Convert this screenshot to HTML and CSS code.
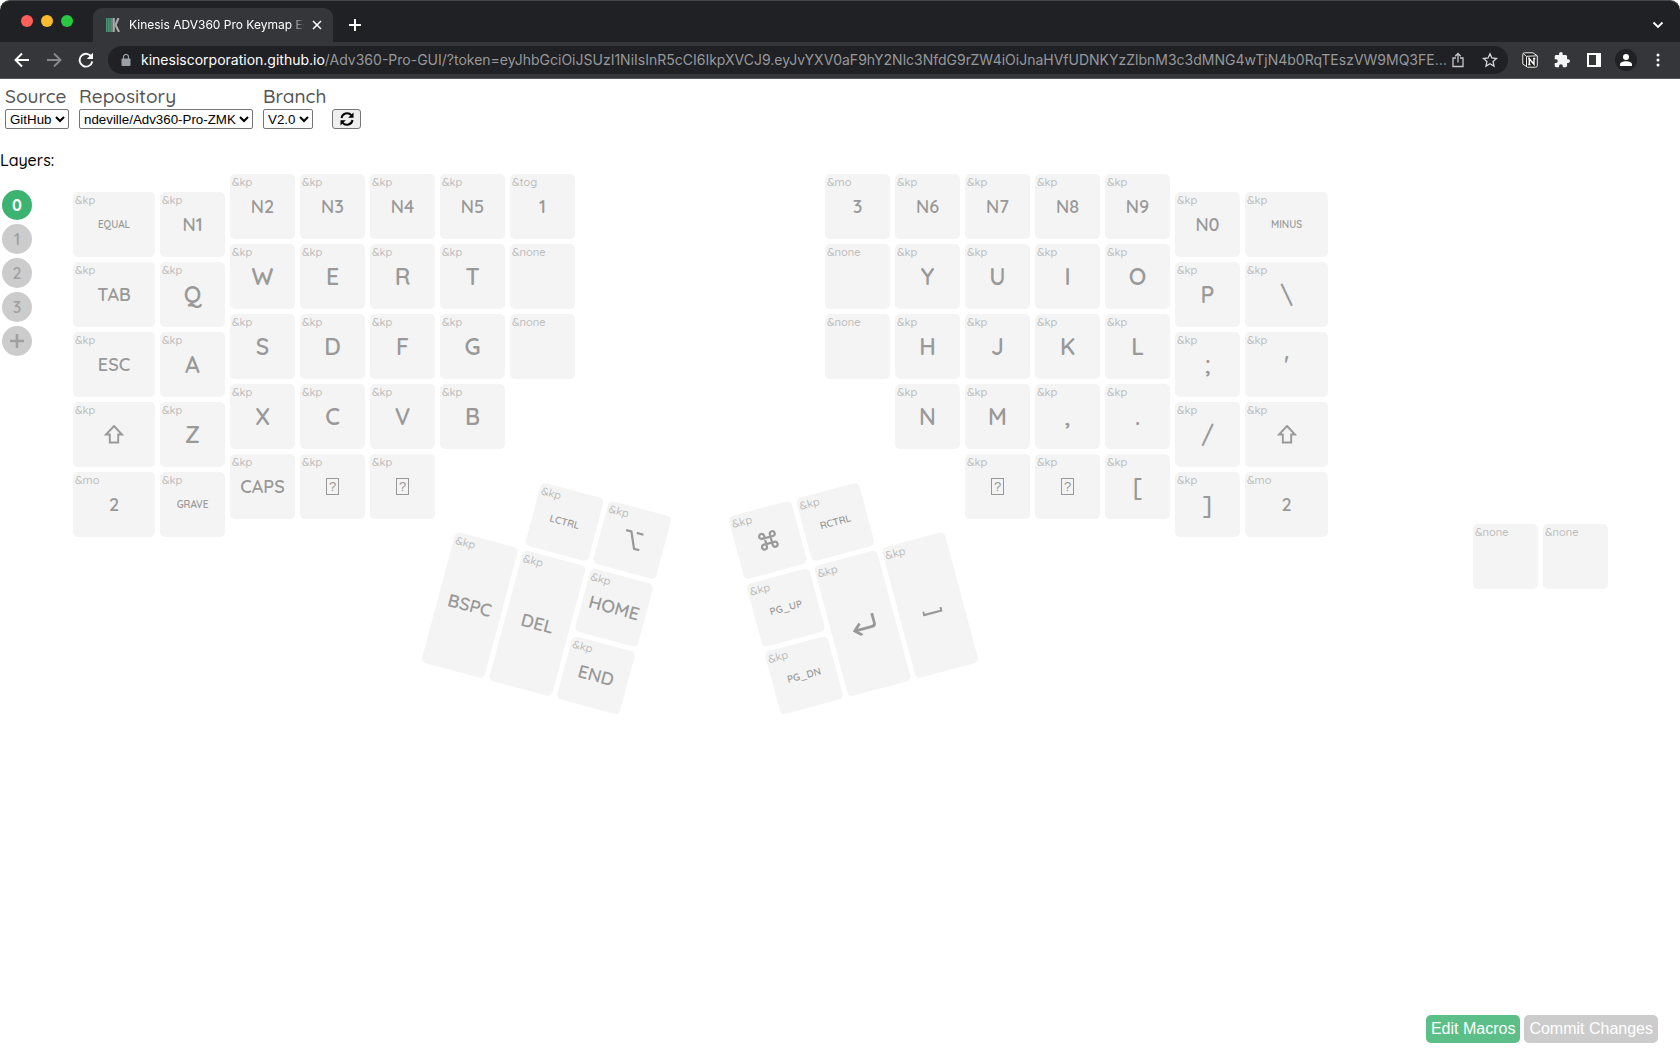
FILE: index.html
```html
<!DOCTYPE html>
<html lang="en">
<head>
<meta charset="utf-8">
<title>Kinesis ADV360 Pro Keymap Editor</title>
<link rel="stylesheet" href="styles.css">
</head>
<body>
<svg class="defs" aria-hidden="true">
  <symbol id="shift" viewBox="0 0 20 20"><path d="M10 1 18 9.500H14.200V17.500H5.800V9.500H2Z" fill="none" stroke="currentColor" stroke-width="1.900"/></symbol>
</svg>

<div class="browser">
  <div class="tabs">
    <div class="lights"><i class="red"></i><i class="amber"></i><i class="green"></i></div>
    <div class="tab">
      <svg class="favicon" width="14" height="14" viewBox="0 0 14 14"><path d="M.7 0V14M2.900 0V14M5.100 0V14" stroke="#4b9878" stroke-width="1.700"/><path d="M7.600 0V14" stroke="#aaa" stroke-width="2.400"/><path d="M12.500 0 9.500 7l3.500 7" fill="none" stroke="#aaa" stroke-width="2.200"/></svg>
      <span class="tab-title">Kinesis ADV360 Pro Keymap Ed</span>
      <button class="plain" aria-label="Close tab"><svg width="10" height="10" viewBox="0 0 10 10"><path d="M1 1 9 9M9 1 1 9" stroke="#fff" stroke-width="1.500"/></svg></button>
    </div>
    <button class="plain new-tab" aria-label="New tab"><svg width="14" height="14" viewBox="0 0 14 14"><path d="M7 1V13M1 7H13" stroke="#fff" stroke-width="2"/></svg></button>
    <button class="plain tab-menu" aria-label="Search tabs"><svg width="12" height="12" viewBox="0 0 12 12"><path d="M1.500 3.500 6 8 10.500 3.500" fill="none" stroke="#fff" stroke-width="1.800"/></svg></button>
  </div>
  <div class="navbar">
    <button class="plain" aria-label="Back"><svg width="16" height="16" viewBox="0 0 16 16"><path d="M15 8H2M8 1.500 1.500 8 8 14.500" fill="none" stroke="#fff" stroke-width="1.900"/></svg></button>
    <button class="plain" aria-label="Forward"><svg width="16" height="16" viewBox="0 0 16 16"><path d="M1 8H14M8 1.500 14.500 8 8 14.500" fill="none" stroke="#87888b" stroke-width="1.900"/></svg></button>
    <button class="plain" aria-label="Reload"><svg width="16" height="16" viewBox="0 0 16 16"><path d="M13.700 5.200A6.400 6.400 0 1 0 14.300 9.500" fill="none" stroke="#fff" stroke-width="1.900"/><path d="M15 .8V7H8.800Z" fill="#fff"/></svg></button>
    <div class="omnibox">
      <svg width="10" height="12" viewBox="0 0 10 12"><path d="M1.500 4.500H8.500Q9.500 4.500 9.500 5.500V11Q9.500 12 8.500 12H1.500Q.5 12 .5 11V5.500Q.5 4.500 1.500 4.500Z" fill="#9aa0a6"/><path d="M2.500 5V3A2.500 2.500 0 0 1 7.500 3V5" fill="none" stroke="#9aa0a6" stroke-width="1.200"/></svg>
      <span class="url"><b>kinesiscorporation.github.io</b>/Adv360-Pro-GUI/?token=eyJhbGciOiJSUzI1NiIsInR5cCI6IkpXVCJ9.eyJvYXV0aF9hY2Nlc3NfdG9rZW4iOiJnaHVfUDNKYzZlbnM3c3dMNG4wTjN4b0RqTEszVW9MQ3FE…</span>
      <button class="plain" aria-label="Share"><svg width="12" height="16" viewBox="0 0 12 16"><path d="M4 6H1V14.500H11V6H8M6 10.500V1.800M3.200 4.300 6 1.500 8.800 4.300" fill="none" stroke="#c4c7c9" stroke-width="1.300"/></svg></button>
      <button class="plain" aria-label="Bookmark"><svg width="16" height="16" viewBox="0 0 16 16"><path d="m8 1.800 1.900 4.200 4.600.5-3.400 3.100.9 4.500L8 11.800 4 14.100l.9-4.500L1.500 6.500 6.100 6Z" fill="none" stroke="#d5d7d9" stroke-width="1.300"/></svg></button>
    </div>
    <button class="plain" aria-label="Notion Web Clipper"><svg width="16" height="16" viewBox="0 0 16 16"><path d="M2.500.8H11L15.300 3.800V13.500Q15.300 15.200 13.500 15.200H5.500L.8 12V2.500Q.8.8 2.500.8Z" fill="#222" stroke="#eee"/><path d="M1.200 1.500 4.500 4.500V15M4.500 4.300 15 3.800" fill="none" stroke="#eee"/><path d="M7.300 12.500V6.700L12 12.300V6.500M6.200 6.500H8M11 6.500H13.300M6.200 12.500H8.500" fill="none" stroke="#fff" stroke-width="1.400"/></svg></button>
    <button class="plain" aria-label="Extensions"><svg width="16" height="16" viewBox="1 1 22 22"><path d="M20.500 11H19V7c0-1.100-.9-2-2-2h-4V3.500a2.500 2.500 0 0 0-5 0V5H4c-1.100 0-2 .9-2 2v3.800h1.500a2.700 2.700 0 0 1 0 5.400H2V20c0 1.100.9 2 2 2h3.800v-1.500a2.700 2.700 0 0 1 5.400 0V22H17c1.100 0 2-.9 2-2v-4h1.500a2.500 2.500 0 0 0 0-5Z" fill="#f1f3f4"/></svg></button>
    <button class="plain" aria-label="Side panel"><svg width="14" height="14" viewBox="0 0 14 14"><path d="M0 0H14V14H0ZM2 2V12H9V2Z" fill="#fff" fill-rule="evenodd"/></svg></button>
    <button class="plain profile" aria-label="Profile"><svg width="12" height="12" viewBox="0 0 12 12"><circle cx="6" cy="3" r="3" fill="#fff"/><path d="M0 12V10.500C0 8 3 7.200 6 7.200s6 .8 6 3.300V12Z" fill="#fff"/></svg></button>
    <button class="plain" aria-label="Menu"><svg width="4" height="14" viewBox="0 0 4 14"><circle cx="2" cy="2" r="1.500" fill="#fff"/><circle cx="2" cy="7" r="1.500" fill="#fff"/><circle cx="2" cy="12" r="1.500" fill="#fff"/></svg></button>
  </div>
</div>

<form class="picker">
  <div class="field source"><label for="source">Source</label><select id="source"><option>GitHub</option></select></div>
  <div class="field repo"><label for="repo">Repository</label><select id="repo"><option>ndeville/Adv360-Pro-ZMK</option></select></div>
  <div class="field branch"><label for="branch">Branch</label><select id="branch"><option>V2.0</option></select></div>
  <button class="refresh" type="button" aria-label="Refresh"><svg width="14" height="14" viewBox="0 0 14 14"><path d="M1.500 6A5.600 5.600 0 0 1 11.300 3.200M12.500 8A5.600 5.600 0 0 1 2.700 10.800" fill="none" stroke="#000" stroke-width="2"/><path d="M13.500.5V5.800H8.200ZM.5 13.500V8.200H5.800Z"/></svg></button>
</form>

<main class="editor">
  <aside class="layers">
    <p>Layers:</p>
    <nav>
      <button class="active">0</button>
      <button>1</button>
      <button>2</button>
      <button>3</button>
      <button aria-label="Add layer"><svg width="14" height="14" viewBox="0 0 14 14"><path d="M7 0V14M0 7H14" stroke="currentColor" stroke-width="2.600"/></svg></button>
    </nav>
  </aside>

  <div class="keyboard">
    <section class="hand left">
      <div class="col outer">
        <button class="key"><small>&amp;kp</small><span class="s">EQUAL</span></button>
        <button class="key"><small>&amp;kp</small><span class="m">TAB</span></button>
        <button class="key"><small>&amp;kp</small><span class="m">ESC</span></button>
        <button class="key"><small>&amp;kp</small><svg class="glyph"><use href="#shift"/></svg></button>
        <button class="key"><small>&amp;mo</small><span class="m">2</span></button>
      </div>
      <div class="col low">
        <button class="key"><small>&amp;kp</small><span class="m">N1</span></button>
        <button class="key"><small>&amp;kp</small><span>Q</span></button>
        <button class="key"><small>&amp;kp</small><span>A</span></button>
        <button class="key"><small>&amp;kp</small><span>Z</span></button>
        <button class="key"><small>&amp;kp</small><span class="s">GRAVE</span></button>
      </div>
      <div class="col">
        <button class="key"><small>&amp;kp</small><span class="m">N2</span></button>
        <button class="key"><small>&amp;kp</small><span>W</span></button>
        <button class="key"><small>&amp;kp</small><span>S</span></button>
        <button class="key"><small>&amp;kp</small><span>X</span></button>
        <button class="key"><small>&amp;kp</small><span class="m">CAPS</span></button>
      </div>
      <div class="col">
        <button class="key"><small>&amp;kp</small><span class="m">N3</span></button>
        <button class="key"><small>&amp;kp</small><span>E</span></button>
        <button class="key"><small>&amp;kp</small><span>D</span></button>
        <button class="key"><small>&amp;kp</small><span>C</span></button>
        <button class="key"><small>&amp;kp</small><span class="missing">?</span></button>
      </div>
      <div class="col">
        <button class="key"><small>&amp;kp</small><span class="m">N4</span></button>
        <button class="key"><small>&amp;kp</small><span>R</span></button>
        <button class="key"><small>&amp;kp</small><span>F</span></button>
        <button class="key"><small>&amp;kp</small><span>V</span></button>
        <button class="key"><small>&amp;kp</small><span class="missing">?</span></button>
      </div>
      <div class="col">
        <button class="key"><small>&amp;kp</small><span class="m">N5</span></button>
        <button class="key"><small>&amp;kp</small><span>T</span></button>
        <button class="key"><small>&amp;kp</small><span>G</span></button>
        <button class="key"><small>&amp;kp</small><span>B</span></button>
      </div>
      <div class="col">
        <button class="key"><small>&amp;tog</small><span class="m">1</span></button>
        <button class="key"><small>&amp;none</small></button>
        <button class="key"><small>&amp;none</small></button>
      </div>
    </section>

    <section class="hand right">
      <div class="col">
        <button class="key"><small>&amp;mo</small><span class="m">3</span></button>
        <button class="key"><small>&amp;none</small></button>
        <button class="key"><small>&amp;none</small></button>
      </div>
      <div class="col">
        <button class="key"><small>&amp;kp</small><span class="m">N6</span></button>
        <button class="key"><small>&amp;kp</small><span>Y</span></button>
        <button class="key"><small>&amp;kp</small><span>H</span></button>
        <button class="key"><small>&amp;kp</small><span>N</span></button>
      </div>
      <div class="col">
        <button class="key"><small>&amp;kp</small><span class="m">N7</span></button>
        <button class="key"><small>&amp;kp</small><span>U</span></button>
        <button class="key"><small>&amp;kp</small><span>J</span></button>
        <button class="key"><small>&amp;kp</small><span>M</span></button>
        <button class="key"><small>&amp;kp</small><span class="missing">?</span></button>
      </div>
      <div class="col">
        <button class="key"><small>&amp;kp</small><span class="m">N8</span></button>
        <button class="key"><small>&amp;kp</small><span>I</span></button>
        <button class="key"><small>&amp;kp</small><span>K</span></button>
        <button class="key"><small>&amp;kp</small><span>,</span></button>
        <button class="key"><small>&amp;kp</small><span class="missing">?</span></button>
      </div>
      <div class="col">
        <button class="key"><small>&amp;kp</small><span class="m">N9</span></button>
        <button class="key"><small>&amp;kp</small><span>O</span></button>
        <button class="key"><small>&amp;kp</small><span>L</span></button>
        <button class="key"><small>&amp;kp</small><span>.</span></button>
        <button class="key"><small>&amp;kp</small><span>[</span></button>
      </div>
      <div class="col low">
        <button class="key"><small>&amp;kp</small><span class="m">N0</span></button>
        <button class="key"><small>&amp;kp</small><span>P</span></button>
        <button class="key"><small>&amp;kp</small><span>;</span></button>
        <button class="key"><small>&amp;kp</small><span>/</span></button>
        <button class="key"><small>&amp;kp</small><span>]</span></button>
      </div>
      <div class="col outer">
        <button class="key"><small>&amp;kp</small><span class="s">MINUS</span></button>
        <button class="key"><small>&amp;kp</small><span>\</span></button>
        <button class="key"><small>&amp;kp</small><span>'</span></button>
        <button class="key"><small>&amp;kp</small><svg class="glyph"><use href="#shift"/></svg></button>
        <button class="key"><small>&amp;mo</small><span class="m">2</span></button>
      </div>
    </section>

    <section class="thumb-row">
      <div class="thumbs thumbs-left">
        <button class="key c2"><small>&amp;kp</small><span class="s">LCTRL</span></button>
        <button class="key c3"><small>&amp;kp</small><svg class="glyph" viewBox="0 0 20 20"><path d="M1 1.500H6.500L13.500 17.500H19M12 1.500H19" fill="none" stroke="currentColor" stroke-width="2.200"/></svg></button>
        <button class="key c1 tall"><small>&amp;kp</small><span class="m">BSPC</span></button>
        <button class="key c2 tall"><small>&amp;kp</small><span class="m">DEL</span></button>
        <button class="key c3"><small>&amp;kp</small><span class="m">HOME</span></button>
        <button class="key c3"><small>&amp;kp</small><span class="m">END</span></button>
      </div>
      <div class="thumbs thumbs-right">
        <button class="key c1"><small>&amp;kp</small><svg class="glyph" viewBox="0 0 20 20"><path d="M7 7V4.500A2.500 2.500 0 1 0 4.500 7H15.500A2.500 2.500 0 1 0 13 4.500V15.500A2.500 2.500 0 1 0 15.500 13H4.500A2.500 2.500 0 1 0 7 15.500Z" fill="none" stroke="currentColor" stroke-width="2.200"/></svg></button>
        <button class="key c2"><small>&amp;kp</small><span class="s">RCTRL</span></button>
        <button class="key c1"><small>&amp;kp</small><span class="s">PG_UP</span></button>
        <button class="key c2 tall"><small>&amp;kp</small><svg class="glyph wide" viewBox="0 0 26 22"><path d="M24 3V13Q24 16 21 16H3M9.500 10 3 16 9.500 22" fill="none" stroke="currentColor" stroke-width="2.800"/></svg></button>
        <button class="key c3 tall"><small>&amp;kp</small><svg class="glyph" viewBox="0 0 20 20"><path d="M1 14V17.500H19V14" fill="none" stroke="currentColor" stroke-width="2.200"/></svg></button>
        <button class="key c1"><small>&amp;kp</small><span class="s">PG_DN</span></button>
      </div>
      <div class="extras">
        <button class="key"><small>&amp;none</small></button>
        <button class="key"><small>&amp;none</small></button>
      </div>
    </section>
  </div>
</main>

<footer class="actions">
  <button class="macros">Edit Macros</button>
  <button disabled>Commit Changes</button>
</footer>
</body>
</html>
```
FILE: styles.css
```css
* { box-sizing: border-box; }

body {
  margin: 0;
  min-height: 100vh;
  display: flex;
  flex-direction: column;
  background: #fff;
  color: #000;
  font-family: Quicksand, Lato, sans-serif;
}

button { margin: 0; padding: 0; border: 0; font: inherit; color: inherit; }
svg { display: block; flex: none; }
.defs { position: absolute; width: 0; height: 0; }

/* Browser frame */
.browser {
  border-radius: 10px 10px 0 0;
  overflow: hidden;
  background: #202124;
  border-top: 1px solid #46474a;
  font-family: Inter, sans-serif;
}
.plain { background: none; display: grid; place-items: center; flex: none; }
.tabs { display: flex; align-items: center; height: 41px; padding: 7px 16px 0 21px; }
.lights { display: flex; gap: 8px; width: 72px; padding-bottom: 8px; }
.lights i { width: 12px; height: 12px; border-radius: 50%; }
.red { background: #ff5f57; }
.amber { background: #febc2e; }
.green { background: #28c840; }
.tab {
  display: flex;
  align-items: center;
  width: 240px;
  height: 34px;
  padding: 0 11px 0 13px;
  border-radius: 9px 9px 0 0;
  background: #35363a;
}
.tab-title {
  flex: 1;
  margin: 0 0 0 9px;
  white-space: nowrap;
  font-size: 12px;
  line-height: 18px;
  color: #fff;
  -webkit-mask-image: linear-gradient(90deg, #000 88%, transparent 96%);
  mask-image: linear-gradient(90deg, #000 88%, transparent 96%);
}
.new-tab { margin-left: 15px; }
.tab-menu { margin-left: auto; }

.navbar {
  display: flex;
  align-items: center;
  gap: 16px;
  height: 37px;
  padding: 0 14px 1px;
  background: #35363a;
  border-bottom: 1px solid #55565a;
}
.navbar > button { width: 16px; }
.omnibox {
  flex: 1;
  min-width: 0;
  display: flex;
  align-items: center;
  height: 28px;
  margin: 0 -2px;
  padding: 0 10px 0 13px;
  border-radius: 14px;
  background: #202124;
}
.omnibox button + button { margin-left: 18px; }
.url {
  flex: 1;
  min-width: 0;
  margin: 0 2px 0 10px;
  white-space: nowrap;
  font-size: 14px;
  color: #96989b;
}
.url b { font-weight: 400; color: #fff; }
.navbar > .profile { width: 22px; height: 22px; margin: 0 -3px; border-radius: 50%; background: #202124; }

/* Repository picker */
.picker { display: flex; align-items: flex-end; gap: 10px; padding: 5px 5px 0; }
.field { display: flex; flex-direction: column; }
.field label { font-size: 19px; line-height: 24px; font-weight: 500; color: #555; }
.field select {
  height: 20px;
  margin: 1px 0 0;
  padding: 0;
  border: 1px solid #767676;
  border-radius: 2px;
  background: #fff;
  color: #000;
}
.source { width: 64px; }
.repo { width: 174px; }
.branch { width: 59px; }
.branch select { width: 50px; }
.refresh {
  display: grid;
  place-items: center;
  width: 29px;
  height: 20px;
  border: 1px solid #767676;
  border-radius: 3px;
  background: #efefef;
}

/* Layer list */
.editor { display: flex; padding-top: 21px; }
.layers { flex: none; width: 73px; }
.layers p { margin: 0 0 20px; font-size: 16px; line-height: 20px; font-weight: 500; }
.layers nav { display: flex; flex-direction: column; gap: 4px; padding-left: 2px; }
.layers button {
  display: grid;
  place-items: center;
  width: 30px;
  height: 30px;
  border-radius: 50%;
  background: #ccc;
  color: #a0a0a0;
  font-size: 16px;
  font-weight: 600;
}
.layers .active { background: #3cb371; color: #fff; font-weight: 700; }

/* Keyboard: both hands share one grid row, the thumb keys overlap its lower part */
.keyboard {
  flex: none;
  display: grid;
  grid-template: 518px / 752px max-content 1fr;
  width: 1535px;
  margin-top: 24px;
}
.hand { grid-row: 1; display: flex; align-items: flex-start; gap: 5px; }
.left { grid-column: 1; }
.right { grid-column: 2; }
.col { display: grid; gap: 5px; grid-auto-rows: 65px; width: 65px; }
.low, .outer { padding-top: 18px; }
.outer { width: 82px; }
.right .outer { width: 83px; }
.key {
  display: grid;
  grid-template: 100% / 100%;
  place-items: center;
  border-radius: 5px;
  background: #f4f4f4;
  color: #999;
}
.key > * { grid-area: 1 / 1; font-size: 23px; line-height: 28px; font-weight: 600; }
.key > .m { font-size: 18px; }
.key > .s { font-size: 10px; }
.key > small {
  place-self: start;
  padding-left: 2px;
  font-size: 11px;
  line-height: 17px;
  font-weight: 500;
  color: #bbb;
}
.key > .missing {
  width: 13px;
  height: 17px;
  border: 1px solid #999;
  font: 13px/15px "Liberation Sans", sans-serif;
}
.glyph { width: 20px; height: 20px; }
.wide { width: 26px; height: 22px; }

.thumb-row {
  grid-area: 1 / 1 / 2 / -1;
  align-self: end;
  display: flex;
  padding-left: 371px;
  pointer-events: none;
}
.thumb-row .key { pointer-events: auto; }
.thumbs { display: grid; grid-template: repeat(3, 65px) / repeat(3, 65px); gap: 5px; }
.thumbs-left { transform: rotate(15deg); margin-right: 102px; }
.thumbs-right { transform: rotate(-15deg); }
.c1 { grid-column: 1; }
.c2 { grid-column: 2; }
.c3 { grid-column: 3; }
.tall { grid-row: 2 / span 2; }
.extras { display: flex; gap: 5px; height: 65px; margin: 37px 0 0 auto; }
.extras .key { width: 65px; }

/* Footer actions */
.actions { display: flex; justify-content: flex-end; gap: 4px; margin-top: auto; padding: 0 22px 7px; }
.actions button {
  height: 28px;
  padding: 0 5px;
  border-radius: 5px;
  background: #ccc;
  color: #fff;
  font: 16px/28px "Liberation Sans", Arial, sans-serif;
}
.actions .macros { background: #5bbf87; }
```
